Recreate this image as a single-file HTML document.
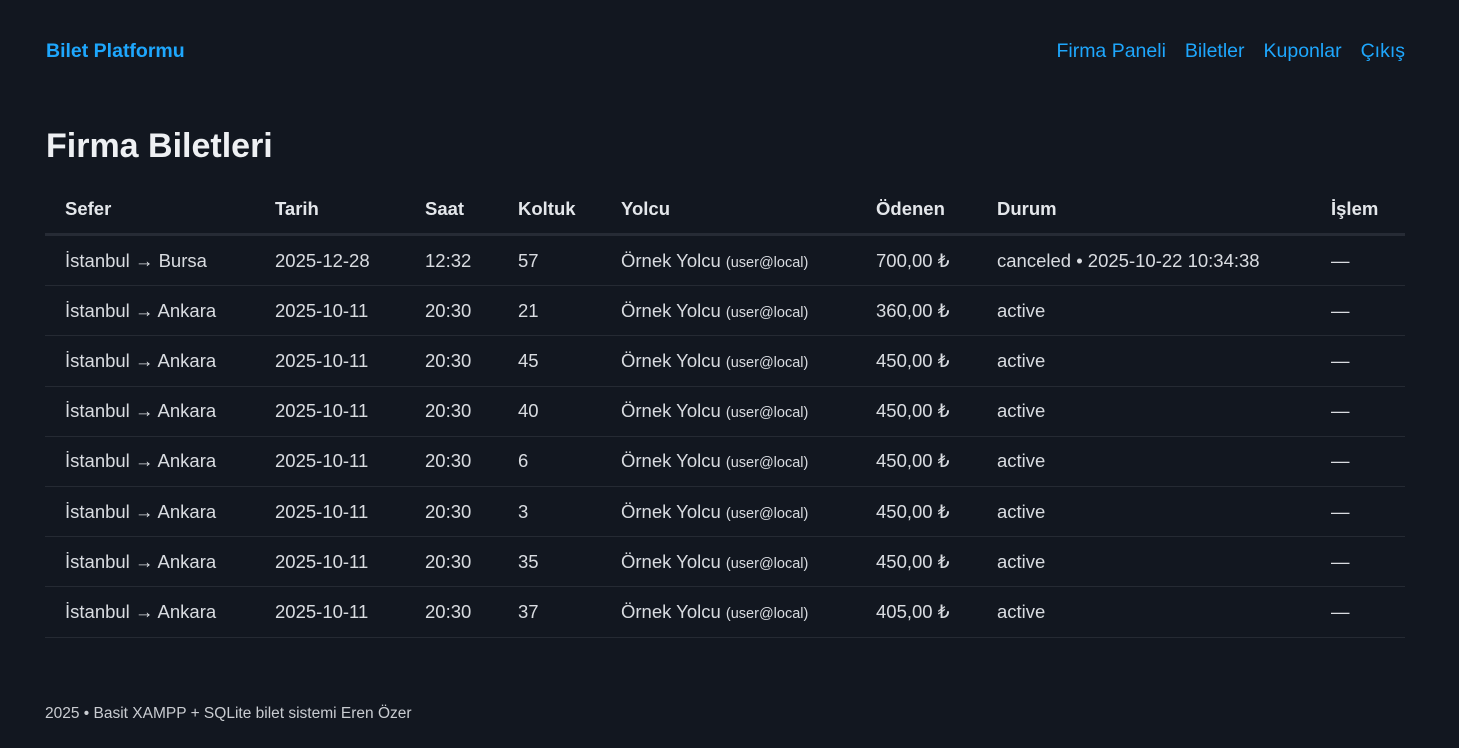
<!DOCTYPE html>
<html><head><meta charset="utf-8"><style>
body{margin:0;background:#121720;color:#e5e7eb;font-family:"Liberation Sans","DejaVu Sans",sans-serif;width:1459px;height:748px;overflow:hidden;position:relative}
a{color:#1ea7fd;text-decoration:none}
.brand{position:absolute;left:46px;top:40px;font-weight:bold;font-size:19.5px;color:#1ea7fd}
.nav{position:absolute;right:54px;top:40px;font-size:19.5px}
.nav a{margin-left:19px}
h1{position:absolute;left:46px;top:127px;margin:0;font-size:34px;font-weight:bold;color:#eef0f3}
table{position:absolute;left:45px;top:184px;width:1360px;border-collapse:collapse;font-size:18.5px}
th{text-align:left;font-weight:bold;height:49px;border-bottom:3px solid #262b35;padding:0 0 0 20px;color:#e3e6ea}
td{height:49.2px;border-bottom:1px solid #252a33;padding:0 0 0 20px;color:#d9dce1}
small{font-size:14.5px}
.foot{position:absolute;left:45px;top:705px;font-size:15.5px;color:#c9ccd1}
</style></head><body>
<div class="brand">Bilet Platformu</div>
<div class="nav"><a>Firma Paneli</a><a>Biletler</a><a>Kuponlar</a><a>Çıkış</a></div>
<h1>Firma Biletleri</h1>
<table>
<colgroup><col style="width:210px"><col style="width:150px"><col style="width:93px"><col style="width:103px"><col style="width:255px"><col style="width:121px"><col style="width:334px"><col></colgroup>
<tr><th>Sefer</th><th>Tarih</th><th>Saat</th><th>Koltuk</th><th>Yolcu</th><th>Ödenen</th><th>Durum</th><th>İşlem</th></tr>
<tr><td>İstanbul → Bursa</td><td>2025-12-28</td><td>12:32</td><td>57</td><td>Örnek Yolcu <small>(user@local)</small></td><td>700,00 ₺</td><td>canceled • 2025-10-22 10:34:38</td><td>—</td></tr>
<tr><td>İstanbul → Ankara</td><td>2025-10-11</td><td>20:30</td><td>21</td><td>Örnek Yolcu <small>(user@local)</small></td><td>360,00 ₺</td><td>active</td><td>—</td></tr>
<tr><td>İstanbul → Ankara</td><td>2025-10-11</td><td>20:30</td><td>45</td><td>Örnek Yolcu <small>(user@local)</small></td><td>450,00 ₺</td><td>active</td><td>—</td></tr>
<tr><td>İstanbul → Ankara</td><td>2025-10-11</td><td>20:30</td><td>40</td><td>Örnek Yolcu <small>(user@local)</small></td><td>450,00 ₺</td><td>active</td><td>—</td></tr>
<tr><td>İstanbul → Ankara</td><td>2025-10-11</td><td>20:30</td><td>6</td><td>Örnek Yolcu <small>(user@local)</small></td><td>450,00 ₺</td><td>active</td><td>—</td></tr>
<tr><td>İstanbul → Ankara</td><td>2025-10-11</td><td>20:30</td><td>3</td><td>Örnek Yolcu <small>(user@local)</small></td><td>450,00 ₺</td><td>active</td><td>—</td></tr>
<tr><td>İstanbul → Ankara</td><td>2025-10-11</td><td>20:30</td><td>35</td><td>Örnek Yolcu <small>(user@local)</small></td><td>450,00 ₺</td><td>active</td><td>—</td></tr>
<tr><td>İstanbul → Ankara</td><td>2025-10-11</td><td>20:30</td><td>37</td><td>Örnek Yolcu <small>(user@local)</small></td><td>405,00 ₺</td><td>active</td><td>—</td></tr>
</table>
<div class="foot">2025 • Basit XAMPP + SQLite bilet sistemi Eren Özer</div>
</body></html>
